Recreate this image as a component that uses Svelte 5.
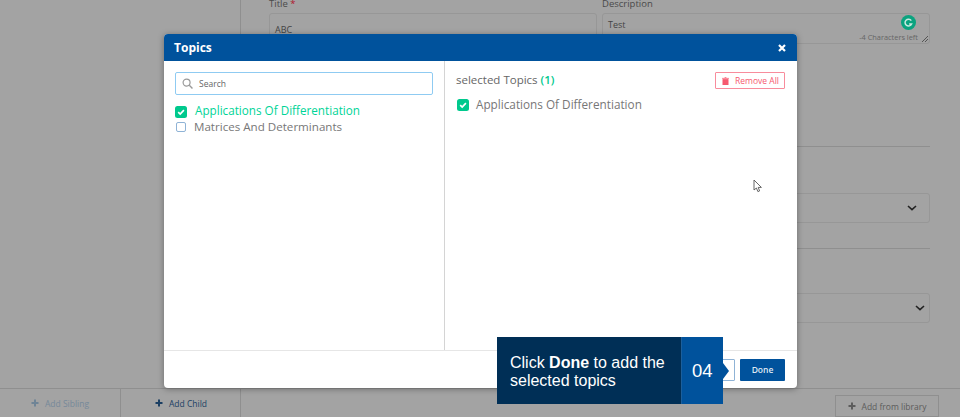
<script>
  // Boite de dialogue "Topics" au-dessus du formulaire grise.
  let topics = [
    { name: 'Applications Of Differentiation', checked: true },
    { name: 'Matrices And Determinants', checked: false }
  ];
  let selected = $derived(topics.filter((t) => t.checked));
</script>

{#snippet check()}
  <svg class="check" viewBox="0 0 12 12" width="12" height="12">
    <rect width="12" height="12" rx="2.5" fill="#00c98d" />
    <path d="M3.2 6.2 5.2 8.1 8.9 4.2" fill="none" stroke="#fff" stroke-width="1.7" />
  </svg>
{/snippet}

{#snippet plus(color)}
  <svg class="plus" viewBox="0 0 8 8" width="8" height="8">
    <path d="M4 .5v7M.5 4h7" stroke={color} stroke-width="2" />
  </svg>
{/snippet}

{#snippet chevron()}
  <svg viewBox="0 0 10 6" width="10" height="6">
    <path d="M1 1l4 3.6L9 1" fill="none" stroke="#222" stroke-width="1.6" />
  </svg>
{/snippet}

<div class="page">
  <div class="main">
    <aside class="side"></aside>
    <section class="form">
      <div class="fields">
        <div class="field">
          <div class="label">Title <span class="req">*</span></div>
          <div class="box title">ABC</div>
        </div>
        <div class="field">
          <div class="label">Description</div>
          <div class="box desc">
            Test
            <span class="left">-4 Characters left</span>
            <svg class="resize" viewBox="0 0 8 8" width="8" height="8">
              <path d="M1 7l6-6M4 7l3-3" stroke="#555" stroke-width="1" />
            </svg>
          </div>
        </div>
      </div>
      <hr class="rule first" />
      <div class="select one">{@render chevron()}</div>
      <hr class="rule second" />
      <div class="select two">{@render chevron()}</div>
    </section>
  </div>

  <footer class="bar">
    <div class="slot sibling">{@render plus('#6f8496')}<span>Add Sibling</span></div>
    <div class="slot child">{@render plus('#1b3f63')}<span>Add Child</span></div>
    <div class="lib">{@render plus('#5c5c5c')}<span>Add from library</span></div>
  </footer>

  <div class="grammarly">
    <svg viewBox="0 0 14 14" width="15" height="15">
      <circle cx="7" cy="7" r="7" fill="#0ba37f" />
      <path d="M9.6 5.2A3.2 3.2 0 1 0 9.9 8.4H7.6" fill="none" stroke="#c9e9e0" stroke-width="1.4" />
    </svg>
  </div>

  <div class="modal">
    <header class="head">
      <h2>Topics</h2>
      <svg viewBox="0 0 8 8" width="8" height="8">
        <path d="M1 1l6 6M7 1 1 7" stroke="#fff" stroke-width="2.2" />
      </svg>
    </header>
    <div class="body">
      <div class="pick">
        <div class="search">
          <svg viewBox="0 0 12 12" width="11" height="11">
            <circle cx="5" cy="5" r="3.8" fill="none" stroke="#999" stroke-width="1.3" />
            <path d="M8 8l3.4 3.4" stroke="#999" stroke-width="1.5" />
          </svg>
          <span>Search</span>
        </div>
        <ul>
          {#each topics as t}
            <li class:on={t.checked}>
              {#if t.checked}
                {@render check()}
              {:else}
                <span class="empty"></span>
              {/if}
              {t.name}
            </li>
          {/each}
        </ul>
      </div>
      <div class="chosen">
        <div class="top">
          <div class="count">selected Topics <b>({selected.length})</b></div>
          <button class="remove">
            <svg viewBox="0 0 8 9" width="7" height="8">
              <path d="M0 1.5h8M3 .5h2M1 2.5h6V9H1z" stroke="#f6596f" fill="#f6596f" stroke-width=".8" />
            </svg>
            Remove All
          </button>
        </div>
        {#each selected as t}
          <div class="row">{@render check()}{t.name}</div>
        {/each}
      </div>
    </div>
    <div class="foot">
      <button class="cancel"></button>
      <button class="done">Done</button>
    </div>
  </div>

  <div class="callout">
    <p>Click <b>Done</b> to add the selected topics</p>
    <div class="step">04</div>
  </div>

  <svg class="cursor" viewBox="0 0 11 14" width="11" height="14">
    <path d="M1 1v10l2.4-2 1.5 3.6 1.7-.7L5.2 8.4h3.2z" fill="#fff" stroke="#555" stroke-width=".9" />
  </svg>
</div>

<style>
  :global(body) {
    margin: 0;
    background: #a3a3a3;
    font-family: 'Open Sans', sans-serif;
    overflow: hidden;
  }
  .page {
    position: relative;
    width: 960px;
    height: 417px;
    display: flex;
    flex-direction: column;
    background: #a3a3a3;
    overflow: hidden;
    color: #555;
  }
  .main {
    flex: 1;
    display: flex;
    min-height: 0;
  }
  .side {
    width: 240px;
    border-right: 1px solid #8f8f8f;
  }
  .form {
    width: 661px;
    padding-left: 28px;
  }
  .fields {
    display: flex;
    gap: 5px;
    margin-top: -5px;
  }
  .field {
    width: 328px;
  }
  .label {
    font-size: 9.5px;
    line-height: 18px;
    color: #4a4a4a;
  }
  .req {
    color: #b0142c;
  }
  .box {
    position: relative;
    box-sizing: border-box;
    height: 31px;
    border: 1px solid #979797;
    border-radius: 3px;
    padding: 4px 5px;
    font-size: 9px;
    color: #444;
  }
  .title {
    padding-top: 9px;
  }
  .left {
    position: absolute;
    right: 11px;
    bottom: 1px;
    font-size: 7.4px;
    color: #666;
  }
  .resize {
    position: absolute;
    right: 0;
    bottom: 0;
  }
  .rule {
    margin: 0;
    border: 0;
    border-top: 1px solid #8f8f8f;
  }
  .first {
    margin-top: 102px;
  }
  .select {
    box-sizing: border-box;
    height: 30px;
    margin-top: 46px;
    border: 1px solid #979797;
    border-radius: 3px;
    display: flex;
    align-items: center;
    justify-content: flex-end;
    padding-right: 12px;
  }
  .second {
    margin-top: 25px;
  }
  .two {
    margin-top: 44px;
    padding-right: 4px;
  }
  .bar {
    height: 28px;
    border-top: 1px solid #8f8f8f;
    display: flex;
    align-items: center;
    font-size: 8.5px;
  }
  .slot {
    height: 100%;
    box-sizing: border-box;
    display: flex;
    align-items: center;
    justify-content: center;
    gap: 6px;
    border-right: 1px solid #8f8f8f;
  }
  .sibling {
    color: #76899a;
    width: 121px;
  }
  .child {
    color: #1b3f63;
    width: 120px;
    padding-left: 1px;
  }
  .lib {
    box-sizing: border-box;
    margin: 6px 0 0 594px;
    width: 104px;
    height: 22px;
    border: 1px solid #8f8f8f;
    display: flex;
    align-items: center;
    justify-content: center;
    gap: 6px;
    color: #5c5c5c;
  }
  .grammarly {
    position: absolute;
    left: 901px;
    top: 15px;
    line-height: 0;
  }
  .modal {
    position: absolute;
    left: 164px;
    top: 34px;
    width: 633px;
    height: 354px;
    background: #fff;
    border-radius: 4px;
    overflow: hidden;
    display: flex;
    flex-direction: column;
    box-shadow: 0 1px 6px rgba(0, 0, 0, 0.35);
  }
  .head {
    height: 27px;
    flex: none;
    background: #00529c;
    display: flex;
    align-items: center;
    justify-content: space-between;
    padding: 0 11px 0 10px;
  }
  h2 {
    margin: 0;
    font-size: 12px;
    font-weight: 700;
    color: #fff;
  }
  .body {
    flex: 1;
    display: flex;
    min-height: 0;
  }
  .pick {
    box-sizing: border-box;
    width: 281px;
    padding: 11px 11px 0;
    border-right: 1px solid #d4d4d4;
  }
  .search {
    box-sizing: border-box;
    height: 23px;
    border: 1px solid #8fcbf2;
    border-radius: 2px;
    display: flex;
    align-items: center;
    gap: 6px;
    padding-left: 6px;
    font-size: 8.5px;
    color: #666;
  }
  ul {
    list-style: none;
    margin: 7px 0 0;
    padding: 0;
  }
  li {
    display: flex;
    align-items: center;
    height: 16px;
    gap: 6px;
    font-size: 11.6px;
    color: #777;
  }
  li.on {
    gap: 8px;
    font-size: 11.7px;
    color: #00d497;
    font-weight: 500;
  }
  li.on .check {
    margin-top: 3px;
  }
  .empty {
    box-sizing: border-box;
    width: 10px;
    height: 10px;
    margin: 1px 2px 0 1px;
    border: 1px solid #8fb3d6;
    border-radius: 2px;
  }
  .chosen {
    flex: 1;
    padding: 10px 12px 0 11px;
  }
  .top {
    display: flex;
    justify-content: space-between;
    align-items: center;
    height: 17px;
  }
  .count {
    font-size: 11.5px;
    color: #666;
  }
  .count b {
    color: #00c98d;
    font-weight: 600;
  }
  .remove {
    box-sizing: border-box;
    width: 70px;
    height: 17px;
    margin-top: 2px;
    padding: 0 0 0 1px;
    border: 1px solid #f88c9c;
    border-radius: 1px;
    background: #fff;
    color: #f6596f;
    font: 8.5px 'Open Sans', sans-serif;
    display: flex;
    align-items: center;
    justify-content: center;
    gap: 6px;
  }
  .row {
    display: flex;
    align-items: center;
    gap: 7px;
    margin-top: 8px;
    font-size: 11.75px;
    color: #777;
  }
  .row .check {
    margin: 2px 0 0 1px;
  }
  .foot {
    flex: none;
    height: 37px;
    border-top: 1px solid #e6e6e6;
    display: flex;
    align-items: center;
    justify-content: flex-end;
    gap: 5px;
    padding: 0 12px;
  }
  .cancel {
    box-sizing: border-box;
    width: 50px;
    height: 22px;
    padding: 0;
    background: #fff;
    border: 1px solid #8fb3d6;
    border-radius: 1px;
  }
  .done {
    width: 45px;
    height: 22px;
    padding: 0;
    border: 0;
    border-radius: 1px;
    background: #00529c;
    color: #dfe9f3;
    font: 600 8.5px 'Open Sans', sans-serif;
  }
  .callout {
    position: absolute;
    left: 497px;
    top: 337px;
    height: 67px;
    display: flex;
    font-family: 'Liberation Sans', sans-serif;
    color: #fff;
  }
  .callout p {
    box-sizing: border-box;
    width: 184px;
    margin: 0;
    padding: 17px 10px 0 13px;
    background: #002f56;
    font-size: 16px;
    line-height: 18px;
  }
  .step {
    position: relative;
    width: 42px;
    background: #00529c;
    border-left: 1px solid #1c5f9c;
    font-size: 18.5px;
    display: flex;
    align-items: center;
    padding-left: 10px;
    box-sizing: border-box;
  }
  .step::after {
    content: '';
    position: absolute;
    left: 100%;
    top: 26px;
    border-left: 6px solid #00529c;
    border-top: 8px solid transparent;
    border-bottom: 8px solid transparent;
  }
  .cursor {
    position: absolute;
    left: 753px;
    top: 179px;
  }
</style>
